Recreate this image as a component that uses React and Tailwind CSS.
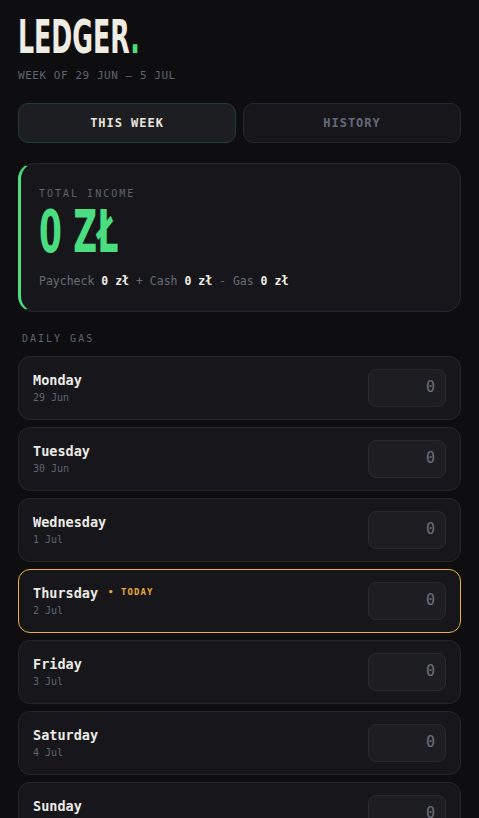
import React, { useState } from 'react';

const mono = { fontFamily: '"DejaVu Sans Mono", "Liberation Mono", monospace' };
const display = { fontFamily: '"Liberation Sans Narrow", "DejaVu Sans Condensed", sans-serif' };

const days = [
  { name: 'Monday', date: '29 Jun' },
  { name: 'Tuesday', date: '30 Jun' },
  { name: 'Wednesday', date: '1 Jul' },
  { name: 'Thursday', date: '2 Jul', today: true },
  { name: 'Friday', date: '3 Jul' },
  { name: 'Saturday', date: '4 Jul' },
  { name: 'Sunday', date: '5 Jul' },
];

const DayRow = ({ day }) => (
  <div
    className={`flex items-center justify-between h-[64px] pl-[14px] pr-[14px] rounded-[12px] bg-[#17171b] border ${
      day.today ? 'border-[#e8b33a]' : 'border-[#26262b]'
    }`}
  >
    <div className="flex flex-col">
      <div className="flex items-center">
        <span className="text-[13.5px] font-bold text-[#ecebe6] leading-[18px]">{day.name}</span>
        {day.today && (
          <span className="ml-[10px] text-[9px] font-bold tracking-[0.12em] text-[#e8a93a]">• TODAY</span>
        )}
      </div>
      <span className="text-[10px] text-[#5f6470] leading-[14px] mt-[2px]">{day.date}</span>
    </div>
    <div className="w-[78px] h-[38px] rounded-[8px] bg-[#1e1e22] border border-[#2a2a2f] flex items-center justify-end pr-[10px] text-[15px] text-[#6b7079]">
      0
    </div>
  </div>
);

export default function App() {
  const [tab, setTab] = useState('week');

  return (
    <div className="min-h-screen bg-[#0e0e10] px-[18px] pt-[19px] pb-8" style={mono}>
      <h1 className="leading-none h-[36px]">
        <span
          className="inline-block origin-left scale-x-[0.61] text-[46px] font-bold text-[#efece4] leading-[36px]"
          style={display}
        >
          LEDGER<span className="text-[#4ade80]">.</span>
        </span>
      </h1>
      <p className="mt-[13px] text-[11px] tracking-[0.05em] text-[#5d6370]">WEEK OF 29 JUN – 5 JUL</p>

      <div className="grid grid-cols-2 gap-[7px] mt-[18px]">
        <button
          onClick={() => setTab('week')}
          className={`h-[40px] rounded-[10px] border text-[12px] font-bold tracking-[0.08em] ${
            tab === 'week'
              ? 'bg-[#1d1e22] border-[#1f4030] text-[#e9e6dc]'
              : 'bg-[#17171b] border-[#27272c] text-[#646a78]'
          }`}
        >
          THIS WEEK
        </button>
        <button
          onClick={() => setTab('history')}
          className={`h-[40px] rounded-[10px] border text-[12px] font-bold tracking-[0.08em] ${
            tab === 'history'
              ? 'bg-[#1d1e22] border-[#1f4030] text-[#e9e6dc]'
              : 'bg-[#17171b] border-[#27272c] text-[#646a78]'
          }`}
        >
          HISTORY
        </button>
      </div>

      {/* Income */}
      <div className="mt-[20px] h-[149px] rounded-[16px] bg-[#17171b] border border-[#26262b] border-l-[3px] border-l-[#4ade80] pl-[18px] pt-[23px]">
        <p className="text-[10px] tracking-[0.2em] text-[#5d6370] leading-[14px]">TOTAL INCOME</p>
        <div className="h-[54px] mt-[4px] flex items-center">
          <span
            className="inline-block origin-left scale-x-[0.62] text-[59px] font-bold text-[#4ade80] leading-none"
            style={display}
          >
            0 ZŁ
          </span>
        </div>
        <p className="mt-[14px] text-[11.5px] text-[#676c76]">
          Paycheck <span className="font-bold text-[#eeece6]">0 zł</span> + Cash{' '}
          <span className="font-bold text-[#eeece6]">0 zł</span> - Gas{' '}
          <span className="font-bold text-[#eeece6]">0 zł</span>
        </p>
      </div>

      <p className="mt-[20px] ml-[4px] text-[10px] tracking-[0.2em] text-[#5d6370] leading-[14px]">DAILY GAS</p>

      <div className="mt-[10px] flex flex-col gap-[7px]">
        {days.map((d) => (
          <DayRow key={d.name} day={d} />
        ))}
      </div>
    </div>
  );
}
